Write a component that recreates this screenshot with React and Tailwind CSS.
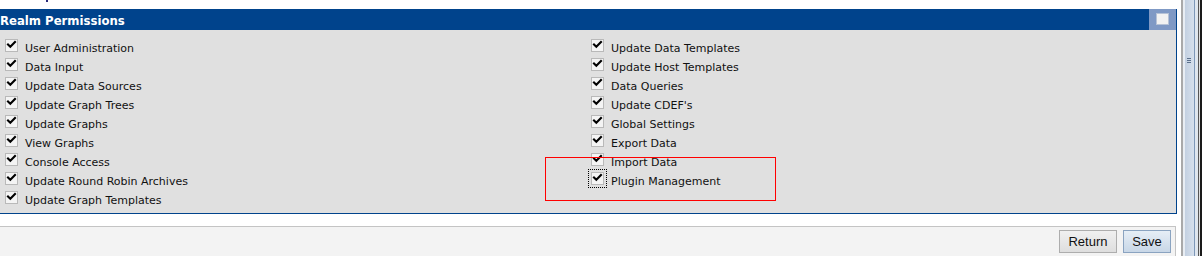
import React from "react";

const left = [
  "User Administration",
  "Data Input",
  "Update Data Sources",
  "Update Graph Trees",
  "Update Graphs",
  "View Graphs",
  "Console Access",
  "Update Round Robin Archives",
  "Update Graph Templates",
];
const right = [
  "Update Data Templates",
  "Update Host Templates",
  "Data Queries",
  "Update CDEF's",
  "Global Settings",
  "Export Data",
  "Import Data",
  "Plugin Management",
];

function Check({ focus }) {
  return (
    <span
      className={
        "mt-[1px] block w-[13px] h-[13px] shrink-0 " +
        (focus ? "outline-1 outline-dotted outline-black outline-offset-2" : "")
      }
    >
      <svg width="13" height="13" viewBox="0 0 13 13" className="block">
        <rect x="0.5" y="0.5" width="12" height="12" fill="#f4f4f4" stroke="#b9b9b9" />
        <path d="M3 5.5 L5.3 7.8 L10 3" fill="none" stroke="#000" strokeWidth="2.1" strokeLinecap="square" />
      </svg>
    </span>
  );
}

function Row({ label, focus }) {
  return (
    <div className="flex h-[19px] items-start">
      <Check focus={focus} />
      <span className="ml-[7px] pt-[2px] leading-[17px] text-[11px] text-[#111] whitespace-nowrap">
        {label}
      </span>
    </div>
  );
}

export default function App() {
  return (
    <div
      className="relative w-[1202px] h-[256px] overflow-hidden bg-white flex"
      style={{ fontFamily: '"DejaVu Sans", Verdana, sans-serif' }}
    >
      <div className="w-[1181px] shrink-0 flex flex-col">
        <div className="h-[9px] relative">
          <div className="absolute left-[46px] top-0 w-[2px] h-[2px] bg-[#2a2a7a]" />
        </div>
        <div className="ml-[-6px] w-[1183px] border-r border-b border-l border-[#00438c]">
          <div className="h-[21px] bg-[#00438c] flex items-stretch">
            <div
              className="pl-[5px] pt-[1px] flex-1 text-white font-bold text-[13px] leading-[21px] whitespace-nowrap"
              style={{ fontFamily: '"DejaVu Sans Condensed", "DejaVu Sans", sans-serif', fontStretch: "condensed" }}
            >
              Realm Permissions
            </div>
            <div className="w-[27px] bg-[#7f99c5] pt-[4px] pl-[7px]">
              <div className="w-[13px] h-[12px] bg-[#f2f2f2] border border-[#b6c2d6]" />
            </div>
          </div>
          <div className="h-[183px] bg-[#e0e0e0] pt-[8px] grid grid-cols-[586px_1fr]">
            <div className="pl-[10px] flex flex-col">
              {left.map((l) => (
                <Row key={l} label={l} />
              ))}
            </div>
            <div className="pl-[10px] flex flex-col">
              {right.map((l) => (
                <Row key={l} label={l} focus={l === "Plugin Management"} />
              ))}
            </div>
          </div>
        </div>
        <div className="h-[12px]" />
        <div className="ml-[-6px] w-[1182px] flex-1 bg-[#f3f3f3] border-t border-r border-[#c4c4c4] flex justify-end items-start pt-[3px] pr-[4px] gap-[6px]">
          <button
            className="w-[58px] h-[23px] border border-[#adadad] bg-gradient-to-b from-[#f0f0f0] to-[#dedede] text-[13px] text-[#111]"
            style={{ fontFamily: '"Liberation Sans", Arial, sans-serif' }}
          >
            Return
          </button>
          <button
            className="w-[48px] h-[23px] border border-[#8aa3c0] bg-gradient-to-b from-[#e6eef6] to-[#c8d7e7] text-[13px] text-[#111]"
            style={{ fontFamily: '"Liberation Sans", Arial, sans-serif' }}
          >
            Save
          </button>
        </div>
      </div>
      {/* scrollbar chrome */}
      <div className="w-[2px] bg-[#a9a9a9]" />
      <div className="w-[2px] bg-[#e8edf3]" />
      <div className="w-[9px] bg-gradient-to-r from-[#c3d0e1] to-[#d6e0ec] relative">
        <div className="absolute left-[2px] top-[58px] w-[4px] flex flex-col gap-[1px]">
          <div className="h-[1px] bg-[#5b708c]" />
          <div className="h-[1px] bg-[#5b708c]" />
          <div className="h-[1px] bg-[#5b708c]" />
        </div>
      </div>
      <div className="w-[1px] bg-[#7d97b8]" />
      <div className="w-[3px] bg-[#dfe6ee]" />
      <div className="w-[1px] bg-[#555]" />
      <div className="w-[1px] bg-[#ddd]" />
      <div className="w-[2px] bg-[#1a1a1a]" />
      <div className="absolute left-[545px] top-[157px] w-[231px] h-[44px] border border-[#ff0000] pointer-events-none" />
    </div>
  );
}
